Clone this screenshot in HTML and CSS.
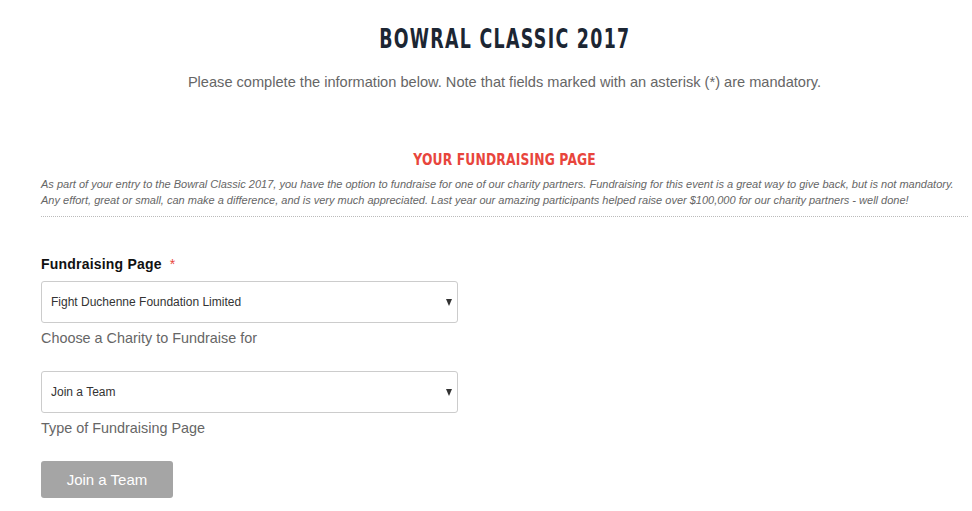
FILE: index.html
```html
<!DOCTYPE html>
<html lang="en">
<head>
    <meta charset="UTF-8">
    <meta name="viewport" content="width=device-width, initial-scale=1.0">
    <title>Bowral Classic 2017</title>
    <link rel="stylesheet" href="styles.css">
</head>
<body>
    <main class="page">
        <h1 class="event-title"><span>BOWRAL CLASSIC 2017</span></h1>
        <p class="intro">Please complete the information below. Note that fields marked with an asterisk (*) are mandatory.</p>

        <section class="fundraising">
            <h2 class="section-title"><span>YOUR FUNDRAISING PAGE</span></h2>
            <p class="section-text">As part of your entry to the Bowral Classic 2017, you have the option to fundraise for one of our charity partners. Fundraising for this event is a great way to give back, but is not mandatory. Any effort, great or small, can make a difference, and is very much appreciated. Last year our amazing participants helped raise over $100,000 for our charity partners - well done!</p>
        </section>

        <form class="form">
            <label class="field-label" for="charity">Fundraising Page <span class="required">*</span></label>
            <div class="field">
                <div class="select-box">
                    <select id="charity">
                        <option>Fight Duchenne Foundation Limited</option>
                    </select>
                    <span class="arrow"></span>
                </div>
                <p class="help">Choose a Charity to Fundraise for</p>
            </div>
            <div class="field">
                <div class="select-box">
                    <select id="page-type">
                        <option>Join a Team</option>
                    </select>
                    <span class="arrow"></span>
                </div>
                <p class="help">Type of Fundraising Page</p>
            </div>
            <button type="button" class="btn">Join a Team</button>
        </form>
    </main>
</body>
</html>
```

FILE: styles.css
```css
body {
    margin: 0;
    padding: 0;
    background-color: #fff;
    font-family: "Liberation Sans", Arial, sans-serif;
}

.page {
    margin: 0 4px 0 41px;
    padding-top: 24px;
}

/* no condensed face installed, so squeeze the heavy one */
.event-title,
.section-title {
    margin: 0;
    text-align: center;
    font-family: "DejaVu Sans", sans-serif;
    font-weight: bold;
}

.event-title span,
.section-title span {
    display: inline-block;
}

.event-title {
    font-size: 27px;
    letter-spacing: 2px;
    line-height: 30px;
    color: #1c2633;
}

.event-title span {
    transform: scaleX(0.645);
}

.intro {
    margin: 18px 0 0;
    text-align: center;
    font-size: 14.6px;
    line-height: 20px;
    color: #666;
}

.fundraising {
    margin-top: 58px;
    padding-bottom: 8px;
    border-bottom: 1px dotted #bbb;
}

.section-title {
    font-size: 16px;
    letter-spacing: 0.2px;
    line-height: 20px;
    color: #e8453c;
}

.section-title span {
    transform: scaleX(0.77);
}

.section-text {
    margin: 6px 0 0;
    font-size: 11px;
    font-style: italic;
    line-height: 16px;
    color: #666;
}

.form {
    padding-top: 38px;
}

.field-label {
    display: block;
    font-size: 14px;
    font-weight: bold;
    letter-spacing: 0.2px;
    line-height: 18px;
    color: #111;
}

.required {
    color: #e8453c;
    font-weight: normal;
    margin-left: 4px;
}

.field {
    margin-top: 8px;
    margin-bottom: 24px;
}

.select-box {
    position: relative;
    width: 417px;
}

.select-box select {
    display: block;
    width: 100%;
    height: 42px;
    padding: 0 30px 0 9px;
    border: 1px solid #ccc;
    border-radius: 3px;
    background: #fff;
    font-family: "Liberation Sans", Arial, sans-serif;
    font-size: 12px;
    color: #333;
    appearance: none;
    -webkit-appearance: none;
    box-sizing: border-box;
}

.arrow {
    position: absolute;
    right: 6px;
    top: 18px;
    width: 0;
    height: 0;
    border-left: 3.5px solid transparent;
    border-right: 3.5px solid transparent;
    border-top: 7px solid #333;
    pointer-events: none;
}

.help {
    margin: 6px 0 0;
    font-size: 14.4px;
    line-height: 18px;
    color: #666;
}

.btn {
    display: block;
    width: 132px;
    height: 37px;
    border: none;
    border-radius: 3px;
    background-color: #a5a5a5;
    color: #fff;
    font-family: "Liberation Sans", Arial, sans-serif;
    font-size: 15px;
    cursor: pointer;
}
```
